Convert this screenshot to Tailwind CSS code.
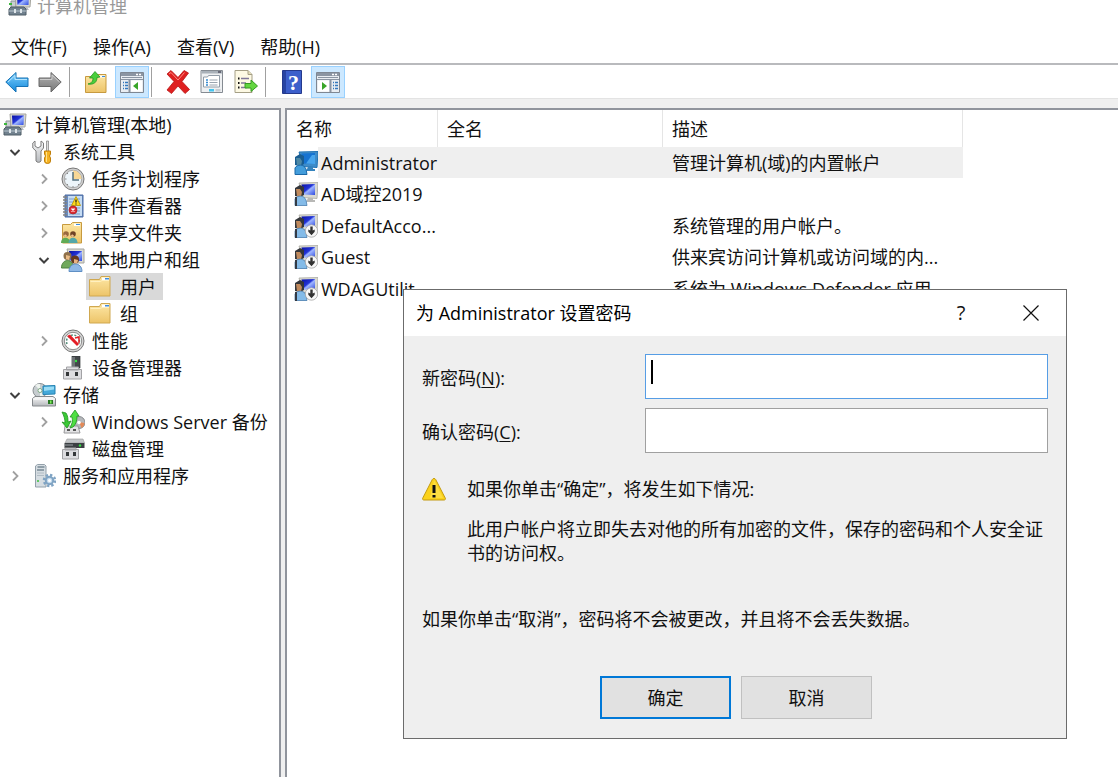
<!DOCTYPE html>
<html lang="zh-CN">
<head>
    <meta charset="UTF-8">
    <meta name="viewport" content="width=device-width, initial-scale=1.0">
    <title>计算机管理</title>
    <script src="https://cdn.jsdelivr.net/npm/@tailwindcss/browser@4"></script>
</head>
<body class="relative flex h-screen flex-col overflow-hidden bg-white font-['Open_Sans','Noto_Sans_CJK_SC',sans-serif] text-[18px] leading-6 text-[#111]">

    <!-- 图标定义 -->
    <svg class="absolute size-0" aria-hidden="true">
        <defs>
            <linearGradient id="g-screen" x1="0" y1="0" x2="1" y2="1">
                <stop offset="0" stop-color="#0a10a0"/><stop offset=".45" stop-color="#2334d8"/><stop offset=".55" stop-color="#9fb6ff"/><stop offset="1" stop-color="#2c48e0"/>
            </linearGradient>
            <linearGradient id="g-folder" x1="0" y1="0" x2="0" y2="1">
                <stop offset="0" stop-color="#fde7a6"/><stop offset="1" stop-color="#edc468"/>
            </linearGradient>
            <linearGradient id="g-blue" x1="0" y1="0" x2="0" y2="1">
                <stop offset="0" stop-color="#7fd0fb"/><stop offset="1" stop-color="#1388dc"/>
            </linearGradient>
            <linearGradient id="g-gray" x1="0" y1="0" x2="0" y2="1">
                <stop offset="0" stop-color="#b4b4b4"/><stop offset="1" stop-color="#777"/>
            </linearGradient>
            <linearGradient id="g-metal" x1="0" y1="0" x2="0" y2="1">
                <stop offset="0" stop-color="#fafafa"/><stop offset="1" stop-color="#b5b8bc"/>
            </linearGradient>
        </defs>
        <symbol id="i-computer" viewBox="0 0 24 24">
            <path d="M3 8h5v9H3z" fill="#c9ced2" stroke="#8b9196"/>
            <path d="M1 10h3v2H1z" fill="#3cb83c"/>
            <path d="M7 1h16l-1 13H8z" fill="#d8d8d2" stroke="#a5a59e"/>
            <path d="M9 2.500h12L20.500 12H9.500z" fill="url(#g-screen)"/>
            <path d="M14 14h5l2 3h-6z" fill="#b9bcc0"/>
            <path d="M1 16l2-2h13l2 2v6H1z" fill="#71818e" stroke="#4f5c66"/>
            <path d="M1 18h17" stroke="#b9c6cf"/>
            <path d="M6 16h2v4H6zM12 16h2v4h-2z" fill="#dfe6ea"/>
        </symbol>
        <symbol id="i-tools" viewBox="0 0 24 24">
            <path d="M3 1v5l3 2 3-2V1l2.500 2v5L9 11v10a3 3 0 0 1-5 0V11L.8 8V3z" fill="url(#g-metal)" stroke="#7d7d7d"/>
            <path d="M14.500 1h2v11h-2z" fill="#ddd" stroke="#888" stroke-width=".8"/>
            <path d="M12.500 11h6v3l-1 2 1 2v3a3 2.500 0 0 1-6 0v-3l1-2-1-2z" fill="#f5b322" stroke="#c07f0b"/>
            <path d="M14.500 12v10" stroke="#ffe28a"/>
        </symbol>
        <symbol id="i-clock" viewBox="0 0 24 24">
            <circle cx="12" cy="12" r="11" fill="#d0d0d0" stroke="#777"/>
            <circle cx="12" cy="12" r="8.700" fill="#edf5fa" stroke="#9a9a9a" stroke-width=".8"/>
            <path d="M12 12V3.500A8.500 8.500 0 0 1 20.500 12z" fill="#f7d795"/>
            <path d="M12 5v8h6" fill="none" stroke="#54717f" stroke-width="1.500"/>
            <path d="M12 19v1.500M4 12h1.500M6 6l1 1M6 18l1-1M18 18l-1-1" stroke="#888"/>
        </symbol>
        <symbol id="i-event" viewBox="0 0 24 24">
            <path d="M4 1h18v22H4z" fill="#6a8cc0" stroke="#4a6aa3"/>
            <path d="M7 2h14v20H7z" fill="#c6dcf3"/>
            <path d="M8 5h11M8 8h11M8 11h11M8 14h11M8 17h11M8 20h11" stroke="#7d9fca"/>
            <path d="M2 3h4M2 6h4M2 9h4M2 12h4M2 15h4M2 18h4M2 21h4" stroke="#818181" stroke-width="1.300"/>
            <path d="M15 2.500l4.500 9H10.500z" fill="#ffd91a" stroke="#b59300" stroke-width=".8"/>
            <path d="M15 5.500v3M15 9.500v1" stroke="#222" stroke-width="1.300"/>
            <circle cx="12" cy="16" r="4" fill="#dc2b32" stroke="#a91c22" stroke-width=".7"/>
            <path d="M10.500 14.500l3 3m0-3l-3 3" stroke="#fff" stroke-width="1.400"/>
        </symbol>
        <symbol id="i-folder" viewBox="0 0 24 24">
            <path d="M1.500 21V4.500h10l1.500-3h9V21z" fill="url(#g-folder)" stroke="#d0a850"/>
            <path d="M14 2.500h7V5h-7z" fill="#fff"/>
            <path d="M17 3h4v1.500h-4z" fill="#3e8ddd"/>
            <path d="M2.500 6.500h10l1.500-1h7" fill="none" stroke="#fff0c0"/>
        </symbol>
        <symbol id="i-share" viewBox="0 0 24 24">
            <path d="M1.500 21V3.500h8l2-2h9V22h-19z" fill="url(#g-folder)" stroke="#c79a3f"/>
            <path d="M13 2.500h6V5h-6z" fill="#fff"/><path d="M15 3h4v1h-4z" fill="#3e8ddd"/>
            <circle cx="5" cy="13" r="2.800" fill="#9a6a3e"/><path d="M0 22c0-7 9-7 9 0z" fill="#61ab55"/>
            <circle cx="12" cy="13" r="2.800" fill="#704326"/><path d="M7.500 22c0-7 9-7 9 0z" fill="#54a7a8"/>
            <path d="M3.500 14l2 1.500M10.500 14l2 1.500" stroke="#f1c08e" stroke-width="2"/>
        </symbol>
        <symbol id="i-users" viewBox="0 0 24 24">
            <path d="M6 1h17v14H9z" fill="#d9d9d2" stroke="#a5a59e"/>
            <path d="M8 3h13v10H9z" fill="url(#g-screen)"/>
            <circle cx="6.500" cy="8" r="4" fill="#8f704a"/><path d="M5 7l4 1-1 4-3-1z" fill="#eabb86"/>
            <path d="M.5 20c0-10 12-10 12 0z" fill="#70a95d" stroke="#4d8140"/>
            <circle cx="14" cy="11.500" r="4" fill="#65391f"/><path d="M13 11l4 1-1 4-3-1z" fill="#e9b382"/>
            <path d="M8 23.500c0-10 13-10 13 0z" fill="#8fb8e6" stroke="#5f8fc4"/>
        </symbol>
        <symbol id="i-gauge" viewBox="0 0 24 24">
            <circle cx="12" cy="12" r="11" fill="#d6d6d6" stroke="#777"/>
            <circle cx="12" cy="12" r="8.700" fill="#fff" stroke="#8b8b8b"/>
            <path d="M6 15a6.500 6.500 0 1 1 12 0" fill="none" stroke="#4f8c78" stroke-width="1.500" stroke-dasharray="2 1.500"/>
            <path d="M6 7l3-1.500L18 15l-2 2z" fill="#e41e26"/>
            <path d="M14 9l4-1v6" fill="none" stroke="#e41e26" stroke-width="1.500"/>
        </symbol>
        <symbol id="i-device" viewBox="0 0 24 24">
            <path d="M11 0h8v12h-8z" fill="#43474a" stroke="#2f3335" stroke-width=".7"/>
            <path d="M11 1h3v10h-3z" fill="#6e7376"/><circle cx="15" cy="5" r="1.200" fill="#36e443"/>
            <path d="M5.500 11h12v3h-12zM2.500 13.500h18V23h-18z" fill="#dddde0" stroke="#a2a2a5"/>
            <path d="M5 16h3v4H5zM14 16h3v4h-3z" fill="#35383a"/>
        </symbol>
        <symbol id="i-storage" viewBox="0 0 24 24">
            <circle cx="8" cy="7.500" r="7" fill="#c7cdd0" stroke="#8b9194"/>
            <path d="M8 7.500L3 2a7 7 0 0 1 5-1zM8 7.500l4 6-4 1z" fill="#eef3ef"/>
            <circle cx="8" cy="7.500" r="2" fill="#fff" stroke="#7eaa84"/>
            <path d="M11 3l12-.5V11l-12 .5z" fill="#45a9d9" stroke="#2683b3"/><path d="M12 4l10-.5v3L12 8z" fill="#9adcf5"/>
            <path d="M3 13.500h18l2.500 2V23H.5v-7.500z" fill="url(#g-metal)" stroke="#85898c"/>
            <path d="M1 16h22" stroke="#fff"/><path d="M16 17h5v4h-5z" fill="#287822"/><path d="M18 17.500h1.500v3H18z" fill="#7dec5a"/>
        </symbol>
        <symbol id="i-backup" viewBox="0 0 24 24">
            <circle cx="18" cy="12.500" r="6" fill="#b5b8bb" stroke="#85888b"/><path d="M18 12l5.500 1a6 6 0 0 1-3 5z" fill="#e48a58"/>
            <circle cx="18" cy="12.500" r="1.800" fill="#fff"/>
            <path d="M4 16h13l2 7H3z" fill="#e3e3e5" stroke="#98989a"/><path d="M6 19h3v2H6zM12 19h3v2h-3z" fill="#555"/>
            <path d="M1 2l4 1c2 3 2 6 2 9l3-1-4 7-5-6 3 1c0-4-1-7-3-11z" fill="#3bc936" stroke="#1f9420" stroke-width=".8"/>
            <path d="M9 7l5-7 4 6h-2c0 5-1 8-4 11l-3 1c2-4 3-7 2-11z" fill="#4fe043" stroke="#1f9420" stroke-width=".8"/>
        </symbol>
        <symbol id="i-disk" viewBox="0 0 24 24">
            <path d="M6 2h16l1.500 4H4z" fill="#c4c7c9" stroke="#999" stroke-width=".6"/>
            <path d="M3.500 6h20v5h-20z" fill="#3c4043"/><path d="M4 7h8v2H4z" fill="#6b7074"/><circle cx="19" cy="8.500" r="1.200" fill="#36e443"/>
            <path d="M4 11h11v2H4zM1.500 12.500h16V22h-16z" fill="#dddde0" stroke="#a2a2a5"/>
            <path d="M5 15h3v4H5zM12 15h3v4h-3z" fill="#35383a"/>
        </symbol>
        <symbol id="i-service" viewBox="0 0 24 24">
            <path d="M3.500 2l2-1.500h7l1.500 1.500v21H3.500z" fill="#d6dde2" stroke="#93a0aa"/>
            <path d="M5.500 3h7M5 6h7" stroke="#49616f" stroke-width="1.200"/><path d="M5 9h7M5 11.500h7" stroke="#b1bcc4"/><circle cx="6" cy="17" r="1" fill="#3ac23a"/>
            <circle cx="17.500" cy="16.500" r="5.500" fill="none" stroke="#7fa3c3" stroke-width="2.500" stroke-dasharray="2.300 2"/>
            <circle cx="17.500" cy="16.500" r="3.700" fill="#c4daec" stroke="#7fa3c3" stroke-width="2"/>
            <circle cx="17.500" cy="16.500" r="1.500" fill="#fff"/>
        </symbol>
        <symbol id="i-user" viewBox="0 0 24 24">
            <path d="M5 1l19-.5-1 16-14-1z" fill="#d9d9d2" stroke="#aaaaa2" stroke-width=".8"/>
            <path d="M7.500 2.500L21 2v11l-12-.5z" fill="url(#g-screen)"/>
            <path d="M14 16h5v2h2v2h-9z" fill="#b8b8b6"/>
            <path d="M1 6l5-3 4 2v8l-4 2-5-1z" fill="#34363a"/>
            <path d="M2 7h4l2 3-1 5-4-1z" fill="#c08a5d"/>
            <path d="M1 23v-6c2-4 9-4 11 1l1 5.500H1z" fill="#84bbe8" stroke="#4a7daf" stroke-width=".8"/>
            <path d="M1 15h2v9H1z" fill="#333a44"/>
        </symbol>
        <symbol id="i-down" viewBox="0 0 24 24">
            <circle cx="17.500" cy="17" r="6.200" fill="#f8f8f8" stroke="#a5a5a5" stroke-width=".8"/>
            <path d="M16.300 12.500h2.400v4l2-1v2.300l-3.200 3.500-3.200-3.500v-2.300l2 1z" fill="#333"/>
        </symbol>
        <symbol id="i-user-selected" viewBox="0 0 24 24">
            <path d="M5 1l19-.5-1 16-14-1z" fill="#3e8cc9" stroke="#2373b3"/>
            <path d="M7.500 2.500L21 2v11l-12-.5z" fill="#1673d1"/><path d="M12 12.500L18 4h3v9z" fill="#48a5ec"/>
            <path d="M14 16h5v2h2v2h-9z" fill="#3583bd"/>
            <path d="M1 6l5-3 4 2v8l-4 2-5-1z" fill="#195d91"/>
            <path d="M2 7h4l2 3-1 5-4-1z" fill="#4e88a5"/>
            <path d="M1 23v-6c2-4 9-4 11 1l1 5.500H1z" fill="#439ddb" stroke="#1b68a7"/>
        </symbol>
        <symbol id="i-open" viewBox="0 0 12 12"><path d="M1.500 4L6 8.500 10.500 4" fill="none" stroke="#404040" stroke-width="2"/></symbol>
        <symbol id="i-closed" viewBox="0 0 12 12"><path d="M4 1.500L8.500 6 4 10.500" fill="none" stroke="#a0a0a0" stroke-width="1.800"/></symbol>
    </svg>

    <!-- 标题栏 -->
    <header class="flex h-[29px] shrink-0 items-start gap-[5px] pl-2">
        <svg class="-mt-[7px] size-6"><use href="#i-computer"/></svg>
        <h1 class="-mt-[6px] text-[#999]">计算机管理</h1>
    </header>

    <!-- 菜单栏 -->
    <nav class="flex h-9 shrink-0 items-center gap-[26px] border-b-2 border-[#b9babd] pt-px pl-[11px]">
        <button type="button">文件(F)</button>
        <button type="button">操作(A)</button>
        <button type="button">查看(V)</button>
        <button type="button">帮助(H)</button>
    </nav>

    <!-- 工具栏 -->
    <div class="flex h-[33px] shrink-0 items-center">
        <button type="button" aria-label="后退" class="flex h-8 w-[33px] items-center justify-center">
            <svg class="size-6" viewBox="0 0 24 24"><path d="M.8 12L11 2.500V8h12v8.500H11V22z" fill="url(#g-blue)" stroke="#1672b5"/><path d="M3 12l7-6.500V9.500h12" fill="none" stroke="#b4e5ff"/></svg>
        </button>
        <button type="button" aria-label="前进" class="flex h-8 w-[34px] items-center justify-center">
            <svg class="size-6" viewBox="0 0 24 24"><path d="M23.200 12L13 2.500V8H1v8.500h12V22z" fill="url(#g-gray)" stroke="#686868"/><path d="M2 9.500h12V5l7.500 7" fill="none" stroke="#ccc"/></svg>
        </button>
        <span class="mr-[9px] ml-[2px] h-[30px] w-px bg-[#a0a0a0]"></span>
        <button type="button" aria-label="上移一级" class="flex h-8 w-[34px] items-center justify-center">
            <svg class="size-6" viewBox="0 0 24 24"><path d="M1.500 22.500v-16h10l2-2h8.500v18z" fill="url(#g-folder)" stroke="#c79a3f"/><path d="M15 5.500h6v2h-6z" fill="#fff"/><path d="M18 6h3v1h-3z" fill="#3e8ddd"/><path d="M4 14c4-1 5-3 5-6H5.500L11 1.500 16 7l-3 .5C13 12 10 15 4 14z" fill="#49cf3b" stroke="#259522" stroke-width=".8"/></svg>
        </button>
        <button type="button" aria-label="显示/隐藏控制台树" class="ml-[2px] flex h-8 w-[34px] items-center justify-center border border-[#99d1ff] bg-[#cce8ff]">
            <svg class="size-6 shrink-0" viewBox="0 0 24 24"><path d="M.5 2.500h23v20H.5z" fill="#e9edf2" stroke="#7e8793"/><path d="M1 3h22v3H1z" fill="#8b95a3"/><path d="M16 4.500h2M19 4.500h2" stroke="#fff" stroke-width="1.500"/><path d="M2 7.500h20M1 9.500h22" stroke="#8b95a3"/><path d="M9.500 10v12" stroke="#8b95a3" stroke-width="2"/><path d="M11 10.500h11v11H11z" fill="#fff"/><path d="M3 12.500h1M3 15.500h1M3 18.500h1M5 12.500h3M5 15.500h3M5 18.500h3" stroke="#3478bd" stroke-width="1.500"/><path d="M18 12v8l-5-4z" fill="#38a528"/></svg>
        </button>
        <span class="mr-[9px] ml-[2px] h-[30px] w-px bg-[#a0a0a0]"></span>
        <button type="button" aria-label="删除" class="flex h-8 w-[34px] items-center justify-center">
            <svg class="size-6" viewBox="0 0 24 24"><path d="M1 4l4-3.500 7 7 6-7L22.500 3l-6.500 8.500 7.500 8-4.500 4-7-7.500-6.500 7.500L1 20l7-8.500z" fill="#df2020" stroke="#b81515" stroke-width=".8"/><path d="M3 4l2-1.500 7 7.500 6.500-7.500" fill="none" stroke="#ff8a80"/></svg>
        </button>
        <button type="button" aria-label="属性" class="flex h-8 w-[34px] items-center justify-center">
            <svg class="size-6" viewBox="0 0 24 24"><path d="M1 .5h21.500v22H1z" fill="#eef0f2" stroke="#858b92"/><path d="M1.500 1H22v2.500H1.500z" fill="#a9b1b9"/><path d="M18 2h3" stroke="#445" stroke-width="1.300"/><path d="M3.500 7h4l1-1.500h11V17h-16z" fill="#fff" stroke="#929da8"/><path d="M6 10h2M6 12.500h2M6 15h2" stroke="#378bd0" stroke-width="1.500"/><path d="M9.500 10h8M9.500 12.500h8M9.500 15h8" stroke="#9aa4af"/><path d="M9 19h5v2.500H9z" fill="#44c5ef"/><path d="M15.500 19h5v2.500h-5z" fill="#c8cdd2"/></svg>
        </button>
        <button type="button" aria-label="导出列表" class="flex h-8 w-[34px] items-center justify-center">
            <svg class="size-6" viewBox="0 0 24 24"><path d="M1 .5h13l4 4v18H1z" fill="#fdf9e4" stroke="#a59f86"/><path d="M14 .5v4h4" fill="#e5deba" stroke="#a59f86"/><path d="M4 8.500h1.500M4 13h1.500M4 17.500h1.500" stroke="#111" stroke-width="1.800"/><path d="M7 8.500h8M7 13h5M7 17.500h6" stroke="#817899" stroke-width="1.400"/><path d="M11 13.500h6V10l6.500 6-6.500 5.500V18h-6z" fill="#63d640" stroke="#349a22"/></svg>
        </button>
        <span class="mr-[9px] ml-[2px] h-[30px] w-px bg-[#a0a0a0]"></span>
        <button type="button" aria-label="帮助" class="flex h-8 w-[34px] items-center justify-center">
            <svg class="size-6" viewBox="0 0 24 24"><path d="M2.500.5h19v23h-19z" fill="#3c5fcb" stroke="#24398c"/><path d="M3 1h3v22H3z" fill="#2743a2"/><text x="8" y="20" font-family="Liberation Serif, serif" font-size="22" font-weight="bold" fill="#fff">?</text></svg>
        </button>
        <button type="button" aria-label="显示/隐藏操作窗格" class="ml-[2px] flex h-8 w-[34px] items-center justify-center border border-[#99d1ff] bg-[#cce8ff]">
            <svg class="size-6 shrink-0" viewBox="0 0 24 24"><path d="M.5 2.500h23v20H.5z" fill="#e9edf2" stroke="#7e8793"/><path d="M1 3h22v3H1z" fill="#8b95a3"/><path d="M16 4.500h2M19 4.500h2" stroke="#fff" stroke-width="1.500"/><path d="M2 7.500h20M1 9.500h22" stroke="#8b95a3"/><path d="M14.500 10v12" stroke="#8b95a3" stroke-width="2"/><path d="M2 10.500h11v11H2z" fill="#fff"/><path d="M17 12.500h1M17 15.500h1M17 18.500h1M19 12.500h3M19 15.500h3M19 18.500h3" stroke="#3478bd" stroke-width="1.500"/><path d="M6 12v8l5-4z" fill="#38a528"/></svg>
        </button>
    </div>

    <main class="flex min-h-0 flex-1 gap-1 border-t border-[#e3e3e3] bg-[#efefef] pt-[9px]">
        <!-- 控制台树 -->
        <aside class="w-[281px] shrink-0 border-t-2 border-r-2 border-[#90949c] bg-white pt-px">
            <ul>
                <li class="flex h-[27px] items-center gap-2 pl-[3px]"><svg class="size-6"><use href="#i-computer"/></svg>计算机管理(本地)</li>
                <li class="flex h-[27px] items-center pl-[9px]"><svg class="mr-[11px] size-3"><use href="#i-open"/></svg><svg class="mr-[7px] size-6"><use href="#i-tools"/></svg>系统工具</li>
                <li class="flex h-[27px] items-center pl-[38px]"><svg class="mr-[11px] size-3"><use href="#i-closed"/></svg><svg class="mr-[7px] size-6"><use href="#i-clock"/></svg>任务计划程序</li>
                <li class="flex h-[27px] items-center pl-[38px]"><svg class="mr-[11px] size-3"><use href="#i-closed"/></svg><svg class="mr-[7px] size-6"><use href="#i-event"/></svg>事件查看器</li>
                <li class="flex h-[27px] items-center pl-[38px]"><svg class="mr-[11px] size-3"><use href="#i-closed"/></svg><svg class="mr-[7px] size-6"><use href="#i-share"/></svg>共享文件夹</li>
                <li class="flex h-[27px] items-center pl-[38px]"><svg class="mr-[11px] size-3"><use href="#i-open"/></svg><svg class="mr-[7px] size-6"><use href="#i-users"/></svg>本地用户和组</li>
                <li class="flex h-[27px] pl-[86px]"><span class="flex items-center bg-[#d9d9d9] pr-[7px] pl-[2px]"><svg class="mr-2 size-6"><use href="#i-folder"/></svg>用户</span></li>
                <li class="flex h-[27px] items-center pl-[88px]"><svg class="mr-2 size-6"><use href="#i-folder"/></svg>组</li>
                <li class="flex h-[27px] items-center pl-[38px]"><svg class="mr-[11px] size-3"><use href="#i-closed"/></svg><svg class="mr-[7px] size-6"><use href="#i-gauge"/></svg>性能</li>
                <li class="flex h-[27px] items-center pl-[61px]"><svg class="mr-[7px] size-6"><use href="#i-device"/></svg>设备管理器</li>
                <li class="flex h-[27px] items-center pl-[9px]"><svg class="mr-[11px] size-3"><use href="#i-open"/></svg><svg class="mr-[7px] size-6"><use href="#i-storage"/></svg>存储</li>
                <li class="flex h-[27px] items-center pl-[38px]"><svg class="mr-[11px] size-3"><use href="#i-closed"/></svg><svg class="mr-[7px] size-6"><use href="#i-backup"/></svg>Windows Server 备份</li>
                <li class="flex h-[27px] items-center pl-[61px]"><svg class="mr-[7px] size-6"><use href="#i-disk"/></svg>磁盘管理</li>
                <li class="flex h-[27px] items-center pl-[9px]"><svg class="mr-[11px] size-3"><use href="#i-closed"/></svg><svg class="mr-[7px] size-6"><use href="#i-service"/></svg>服务和应用程序</li>
            </ul>
        </aside>

        <!-- 用户列表 -->
        <section class="min-w-0 flex-1 overflow-hidden border-t-2 border-l-2 border-[#90949c] bg-white">
            <table class="w-[676px] table-fixed border-separate border-spacing-0 text-left">
                <colgroup><col class="w-[151px]"><col class="w-[225px]"><col class="w-[300px]"></colgroup>
                <thead>
                    <tr class="h-[37px]">
                        <th class="border-r border-[#e5e5e5] p-0 pt-px pl-[9px] font-normal">名称</th>
                        <th class="border-r border-[#e5e5e5] p-0 pt-px pl-[9px] font-normal">全名</th>
                        <th class="border-r border-[#e5e5e5] p-0 pt-px pl-[9px] font-normal">描述</th>
                    </tr>
                </thead>
                <tbody>
                    <tr class="odd:h-[31px] even:h-8">
                        <td class="p-0"><div class="flex items-center pl-[7px]"><svg class="size-6 shrink-0"><use href="#i-user-selected"/></svg><span class="flex h-[31px] flex-1 items-center bg-[#efefef] pl-[3px]">Administrator</span></div></td>
                        <td class="bg-[#efefef] p-0"></td>
                        <td class="bg-[#efefef] p-0 pl-[9px]">管理计算机(域)的内置帐户</td>
                    </tr>
                    <tr class="odd:h-[31px] even:h-8">
                        <td class="p-0"><div class="flex items-center pl-[7px]"><svg class="mr-[3px] size-6"><use href="#i-user"/></svg>AD域控2019</div></td>
                        <td class="p-0"></td>
                        <td class="p-0"></td>
                    </tr>
                    <tr class="odd:h-[31px] even:h-8">
                        <td class="p-0"><div class="flex items-center pl-[7px]"><svg class="mr-[3px] size-6"><use href="#i-user"/><use href="#i-down"/></svg>DefaultAcco...</div></td>
                        <td class="p-0"></td>
                        <td class="p-0 pl-[9px]">系统管理的用户帐户。</td>
                    </tr>
                    <tr class="odd:h-[31px] even:h-8">
                        <td class="p-0"><div class="flex items-center pl-[7px]"><svg class="mr-[3px] size-6"><use href="#i-user"/><use href="#i-down"/></svg>Guest</div></td>
                        <td class="p-0"></td>
                        <td class="p-0 pl-[9px] whitespace-nowrap">供来宾访问计算机或访问域的内...</td>
                    </tr>
                    <tr class="odd:h-[31px] even:h-8">
                        <td class="p-0"><div class="flex items-center pl-[7px]"><svg class="mr-[3px] size-6"><use href="#i-user"/><use href="#i-down"/></svg>WDAGUtilit...</div></td>
                        <td class="p-0"></td>
                        <td class="p-0 pl-[9px] whitespace-nowrap">系统为 Windows Defender 应用...</td>
                    </tr>
                </tbody>
            </table>
        </section>
    </main>

    <!-- 设置密码对话框 -->
    <form role="dialog" aria-labelledby="dlg-title" class="absolute top-[289px] left-[403px] w-[664px] border border-[#6b6b6b] bg-[#efefef]">
        <div class="flex h-[46px] items-center bg-white pl-3">
            <h2 id="dlg-title" class="flex-1 text-black">为 Administrator 设置密码</h2>
            <button type="button" aria-label="帮助" class="flex h-full w-[70px] items-center justify-center text-[20px]">?</button>
            <button type="button" aria-label="关闭" class="flex h-full w-[70px] items-center justify-center">
                <svg class="size-4" viewBox="0 0 16 16"><path d="M.5.5l15 15m0-15l-15 15" stroke="#111" stroke-width="1.200"/></svg>
            </button>
        </div>

        <div class="px-[18px] pt-[18px] pb-[19px]">
            <div class="grid grid-cols-[223px_1fr] items-center gap-y-[9px]">
                <label for="new-pwd" class="pt-[3px]">新密码(<u class="underline-offset-2">N</u>):</label>
                <div class="relative">
                    <input id="new-pwd" type="password" class="block h-[45px] w-full border border-[#569de5] bg-white px-2 outline-none">
                    <span class="absolute top-[6px] left-[6px] h-6 w-[2px] bg-black"></span>
                </div>
                <label for="confirm-pwd" class="pt-[3px]">确认密码(<u class="underline-offset-2">C</u>):</label>
                <input id="confirm-pwd" type="password" class="block h-[45px] w-full border border-[#a0a0a0] bg-white px-2 outline-none">
            </div>

            <div class="mt-6 flex gap-[21px]">
                <svg class="size-6 shrink-0" viewBox="0 0 24 24"><path d="M12 1.500c.8 0 1.300.3 1.700 1l9.500 18.500c.6 1.300 0 2-1.200 2H2c-1.200 0-1.800-.7-1.200-2L10.300 2.500c.4-.7.9-1 1.700-1z" fill="#fbd21b" stroke="#c39a10"/><path d="M12 3l9 18H8z" fill="#ffe868" opacity=".5"/><path d="M10.500 8h3v8h-3zM10.500 18h3v2.500h-3z" fill="#111"/></svg>
                <div class="-mr-1">
                    <p>如果你单击“确定”，将发生如下情况:</p>
                    <p class="mt-4">此用户帐户将立即失去对他的所有加密的文件，保存的密码和个人安全证书的访问权。</p>
                </div>
            </div>

            <p class="mt-[42px]">如果你单击“取消”，密码将不会被更改，并且将不会丢失数据。</p>

            <div class="mt-[45px] ml-[178px] flex gap-[10px]">
                <button type="submit" class="h-[43px] w-[131px] border-2 border-[#0078d7] bg-[#e1e1e1]">确定</button>
                <button type="button" class="h-[43px] w-[131px] border border-[#c0c0c0] bg-[#e1e1e1]">取消</button>
            </div>
        </div>
    </form>
</body>
</html>
